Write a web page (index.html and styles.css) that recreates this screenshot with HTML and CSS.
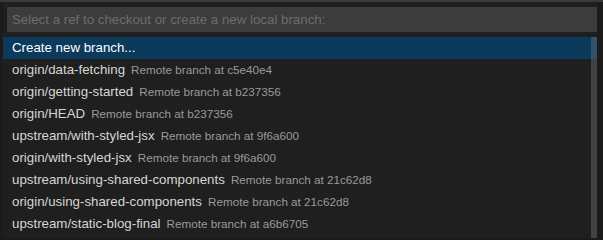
FILE: index.html
```html
<!DOCTYPE html>
<html>
<head>
<meta charset="utf-8">
<link rel="stylesheet" href="styles.css">
</head>
<body>
<div class="topline"></div>
<div class="widget">
  <div class="input-wrap">
    <div class="input">Select a ref to checkout or create a new local branch:</div>
  </div>
  <div class="list">
    <div class="rows">
      <div class="row selected"><span class="label">Create new branch...</span></div>
      <div class="row"><span class="label">origin/data-fetching</span><span class="desc">Remote branch at c5e40e4</span></div>
      <div class="row"><span class="label">origin/getting-started</span><span class="desc">Remote branch at b237356</span></div>
      <div class="row"><span class="label">origin/HEAD</span><span class="desc">Remote branch at b237356</span></div>
      <div class="row"><span class="label">upstream/with-styled-jsx</span><span class="desc">Remote branch at 9f6a600</span></div>
      <div class="row"><span class="label">origin/with-styled-jsx</span><span class="desc">Remote branch at 9f6a600</span></div>
      <div class="row"><span class="label">upstream/using-shared-components</span><span class="desc">Remote branch at 21c62d8</span></div>
      <div class="row"><span class="label">origin/using-shared-components</span><span class="desc">Remote branch at 21c62d8</span></div>
      <div class="row"><span class="label">upstream/static-blog-final</span><span class="desc">Remote branch at a6b6705</span></div>
    </div>
    <div class="scrollbar"></div>
  </div>
</div>
</body>
</html>
```
FILE: styles.css
```css
html, body {
  margin: 0;
  padding: 0;
  background: #1b1b1b;
  width: 603px;
  height: 238px;
  overflow: hidden;
  font-family: "Liberation Sans", Arial, sans-serif;
}
.topline {
  height: 2px;
  background: #3a3a3a;
}
.widget {
  margin: 0 6px 0 3px;
  background: #1f1f1f;
  height: 236px;
  overflow: hidden;
}
.input-wrap {
  padding: 5px 0 5px 4px;
}
.input {
  height: 25px;
  background: #3c3c3c;
  color: #6c6c6c;
  font-size: 13.3px;
  line-height: 25px;
  padding-left: 5px;
}
.list {
  display: flex;
  position: relative;
}
.rows {
  flex: 1;
}
.row {
  height: 22px;
  line-height: 22px;
  padding-left: 9px;
  white-space: nowrap;
  color: #d6d6d6;
  font-size: 13.3px;
}
.row.selected {
  background: #0b3a5c;
  color: #ffffff;
}
.desc {
  color: #9a9a9a;
  font-size: 11.7px;
  margin-left: 6px;
}
.scrollbar {
  position: absolute;
  right: 0;
  top: 0;
  width: 6px;
  height: 220px;
  background: rgba(121, 121, 121, 0.4);
}
```
